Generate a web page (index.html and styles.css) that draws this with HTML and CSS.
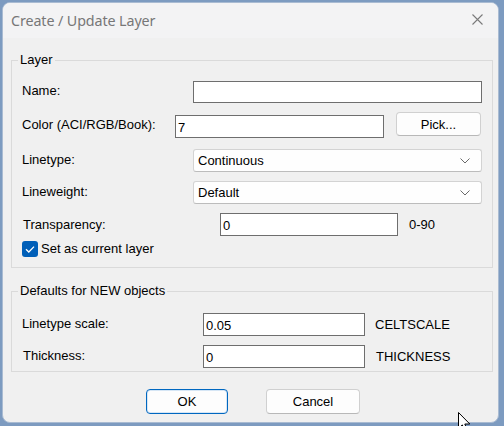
FILE: index.html
```html
<!DOCTYPE html>
<html>
<head>
<meta charset="utf-8">
<link rel="stylesheet" href="styles.css">
</head>
<body>
<div class="window">
  <div class="titlebar">
    <span class="title">Create / Update Layer</span>
    <svg class="close" width="11" height="11" viewBox="0 0 11 11"><path d="M0.5 0.5 L10.5 10.5 M10.5 0.5 L0.5 10.5" stroke="#7a7a7a" stroke-width="1.1" fill="none"/></svg>
  </div>
  <div class="content">
    <fieldset class="group group-layer">
      <legend class="legend">Layer</legend>
      <div class="row row-name">
        <span class="lbl lbl-name lbl-up">Name:</span>
        <input class="edit edit-name" type="text" value="">
      </div>
      <div class="row row-color">
        <span class="lbl lbl-color">Color (ACI/RGB/Book):</span>
        <input class="edit edit-color" type="text" value="7">
        <button class="btn btn-pick">Pick...</button>
      </div>
      <div class="row row-ltype">
        <span class="lbl lbl-name lbl-up">Linetype:</span>
        <div class="combo"><span class="combo-text">Continuous</span>
          <svg class="chev" width="10" height="6" viewBox="0 0 10 6"><path d="M0.5 0.5 L5 5 L9.5 0.5" stroke="#6a6a6a" stroke-width="1" fill="none"/></svg>
        </div>
      </div>
      <div class="row row-lweight">
        <span class="lbl lbl-name lbl-up">Lineweight:</span>
        <div class="combo"><span class="combo-text">Default</span>
          <svg class="chev" width="10" height="6" viewBox="0 0 10 6"><path d="M0.5 0.5 L5 5 L9.5 0.5" stroke="#6a6a6a" stroke-width="1" fill="none"/></svg>
        </div>
      </div>
      <div class="row row-trans">
        <span class="lbl lbl-trans">Transparency:</span>
        <input class="edit edit-trans" type="text" value="0">
        <span class="note note-trans">0-90</span>
      </div>
      <div class="row row-check">
        <span class="check"><svg width="16" height="16" viewBox="0 0 16 16"><path d="M4 8.2 L6.8 11 L12 5.6" stroke="#ffffff" stroke-width="1.3" fill="none"/></svg></span>
        <span class="check-lbl">Set as current layer</span>
      </div>
    </fieldset>
    <fieldset class="group group-defaults">
      <legend class="legend">Defaults for NEW objects</legend>
      <div class="row row-scale">
        <span class="lbl lbl-scale lbl-up">Linetype scale:</span>
        <input class="edit edit-scale" type="text" value="0.05">
        <span class="note note-scale">CELTSCALE</span>
      </div>
      <div class="row row-thick">
        <span class="lbl lbl-thick lbl-up">Thickness:</span>
        <input class="edit edit-scale" type="text" value="0">
        <span class="note note-thick">THICKNESS</span>
      </div>
    </fieldset>
    <div class="buttons">
      <button class="btn btn-ok">OK</button>
      <button class="btn btn-cancel">Cancel</button>
    </div>
  </div>
</div>
<svg class="cursor" width="14" height="22" viewBox="0 0 14 22"><path d="M0.5 0.5 L0.5 16.5 L4.3 12.9 L7 19.2 L9.4 18.2 L6.8 12 L11.8 12 Z" fill="#ffffff" stroke="#000000" stroke-width="1"/></svg>
</body>
</html>
```

FILE: styles.css
```css
html, body {
  margin: 0;
  padding: 0;
}
body {
  width: 504px;
  height: 426px;
  background: #7d9bc0;
  font-family: "Liberation Sans", Arial, sans-serif;
  font-size: 13px;
  color: #000;
  overflow: hidden;
  position: relative;
}
.window {
  position: relative;
  margin: 2px 0 0 2px;
  width: 497px;
  height: 421px;
  box-sizing: border-box;
  background: #f0f0f0;
  border: 1px solid #a9bbd2;
  border-radius: 8px;
  overflow: hidden;
}
.titlebar {
  height: 35px;
  display: flex;
  align-items: center;
  justify-content: space-between;
  padding: 0 15px 0 8px;
  background: #f3f3f4;
}
.title {
  font-family: "Noto Sans", "Open Sans", sans-serif;
  font-size: 14.3px;
  color: #777777;
  letter-spacing: -0.1px;
}
.close {
  display: block;
  margin-top: -3px;
}
.content {
  padding: 14px 5px 0 8px;
}
.group {
  margin: 0;
  border: 1px solid #dadada;
  min-width: 0;
}
.group-layer {
  padding: 13px 10px 10px 10px;
}
.group-defaults {
  margin-top: 15px;
  padding: 14px 10px 3px 10px;
}
.legend {
  font-size: 13px;
  line-height: 16px;
  padding: 0 2px;
  margin-left: -4px;
}
.row {
  display: flex;
  align-items: center;
}
.row-color { margin-top: 9px; }
.row-ltype { margin-top: 11px; }
.row-lweight { margin-top: 9px; }
.row-trans { margin-top: 9px; }
.row-check { margin-top: 4px; height: 17px; }
.row-thick { margin-top: 9px; }
.lbl { flex: none; }
.lbl-up { margin-bottom: 3px; }
.lbl-name { width: 171px; }
.lbl-color { width: 153px; margin-top: -2px; }
.lbl-trans { width: 197px; margin-left: 1px; }
.lbl-scale { width: 181px; }
.lbl-thick { width: 180px; margin-left: 1px; }
.edit {
  box-sizing: border-box;
  height: 23px;
  margin: 0;
  padding: 1px 2px 0 2px;
  border: 1px solid #6e6e6e;
  background: #fff;
  font-family: "Liberation Sans", Arial, sans-serif;
  font-size: 13px;
  color: #000;
  outline: none;
  border-radius: 0;
}
.edit-name { width: 289px; height: 22px; }
.edit-color { width: 209px; margin-top: 3px; }
.edit-trans { width: 178px; }
.edit-scale { width: 162px; }
.note { flex: none; margin-bottom: 1px; }
.note-trans { margin-left: 11px; }
.note-scale { margin-left: 10px; }
.note-thick { margin-left: 11px; }
.combo {
  box-sizing: border-box;
  width: 289px;
  height: 23px;
  display: flex;
  align-items: center;
  justify-content: space-between;
  padding: 0 11px 0 4px;
  background: #fefefe;
  border: 1px solid #d3d3d3;
  border-bottom-color: #bcbcbc;
  border-radius: 3px;
}
.chev { display: block; }
.check {
  box-sizing: border-box;
  width: 16px;
  height: 16px;
  margin-left: 0;
  background: #005fb8;
  border-radius: 3px;
  display: block;
}
.check svg { display: block; }
.check-lbl { margin-left: 3px; }
.btn {
  box-sizing: border-box;
  margin: 0;
  padding: 0;
  font-family: "Liberation Sans", Arial, sans-serif;
  font-size: 13px;
  color: #000;
  background: #fdfdfd;
  border: 1px solid #d0d0d0;
  border-bottom-color: #b8b8b8;
  border-radius: 4px;
}
.btn-pick {
  width: 85px;
  height: 24px;
  margin-left: 12px;
  margin-bottom: 2px;
}
.buttons {
  display: flex;
  margin-top: 17px;
  padding-left: 135px;
}
.btn-ok {
  width: 82px;
  height: 25px;
  border: 1px solid #0067c0;
  box-shadow: inset 0 0 0 1px #d6e6f5;
}
.btn-cancel {
  width: 94px;
  height: 25px;
  margin-left: 38px;
}
.cursor {
  position: absolute;
  left: 458px;
  top: 412px;
}
```
